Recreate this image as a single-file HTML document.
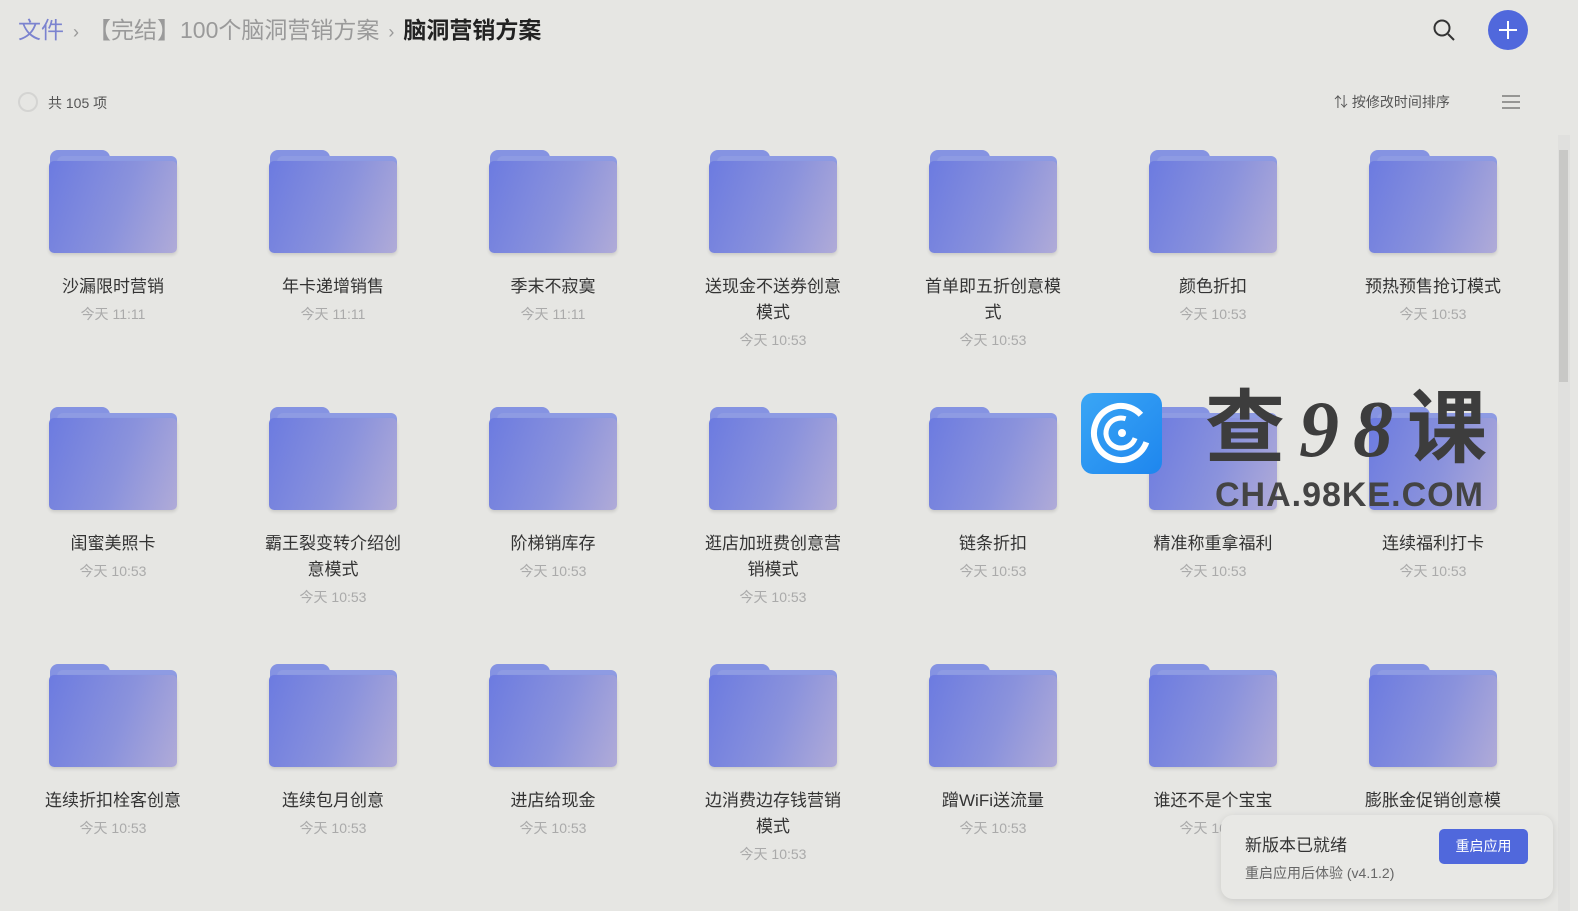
<!DOCTYPE html>
<html><head><meta charset="utf-8"><style>
*{margin:0;padding:0;box-sizing:border-box}
body{width:1578px;height:911px;background:#e6e6e3;font-family:"Liberation Sans","Noto Sans CJK SC",sans-serif;position:relative;overflow:hidden}
.bc{position:absolute;left:18px;top:14px;font-size:23px;line-height:32px;white-space:nowrap}
.sep{color:#999;font-size:18px;margin:0 9px}
.it{position:absolute;width:200px;text-align:center}
.f{position:absolute;left:36px;top:0;width:128px;height:103px}
.f .tab{position:absolute;left:1px;top:0;width:60px;height:20px;background:#8593e2;border-radius:8px 8px 0 0}
.f .tab2{position:absolute;left:8px;top:6px;width:120px;height:18px;background:#8e9be3;border-radius:6px 6px 0 0}
.f .body{position:absolute;left:0;top:11px;width:128px;height:92px;border-radius:5px;background:linear-gradient(110deg,#6c7be0 0%,#8a92dc 55%,#b0abd8 100%);box-shadow:0 2px 3px rgba(0,0,0,.12)}
.n{position:absolute;top:124px;left:25px;width:150px;font-size:17px;line-height:26px;color:#333}
.t{font-size:14px;color:#aaa;line-height:28px}
</style></head><body>
<div class="bc"><span style="color:#7b83cf">文件</span><span class="sep">›</span><span style="color:#9a9a9a">【完结】100个脑洞营销方案</span><span class="sep">›</span><b style="color:#222">脑洞营销方案</b></div>
<svg style="position:absolute;left:1432px;top:18px" width="26" height="26" viewBox="0 0 26 26"><circle cx="10" cy="10" r="7.5" fill="none" stroke="#333" stroke-width="2"/><path d="M16 16l6 6" stroke="#333" stroke-width="2"/></svg>
<div style="position:absolute;left:1488px;top:10px;width:40px;height:40px;border-radius:50%;background:#5068dc"></div>
<svg style="position:absolute;left:1488px;top:10px" width="40" height="40"><path d="M20 11v18M11 20h18" stroke="#fff" stroke-width="2"/></svg>
<div style="position:absolute;left:18px;top:92px;width:20px;height:20px;border:2px solid #d4d4d2;border-radius:50%"></div>
<div style="position:absolute;left:48px;top:93px;font-size:14px;color:#555">共 105 项</div>
<div style="position:absolute;left:1334px;top:92px;font-size:14px;color:#555">⇅ 按修改时间排序</div>
<svg style="position:absolute;left:1501px;top:94px" width="20" height="16"><path d="M1 2h18M1 8h18M1 14h18" stroke="#666" stroke-width="1.3"/></svg>
<div style="position:absolute;left:1558px;top:135px;width:12px;height:776px;background:#e0e0de"></div>
<div style="position:absolute;left:1559px;top:150px;width:9px;height:232px;background:#c8c8c6"></div>
<div id="g"></div>
<script>
var d=[["沙漏限时营销","今天 11:11"],["年卡递增销售","今天 11:11"],["季末不寂寞","今天 11:11"],["送现金不送券创意模式","今天 10:53"],["首单即五折创意模式","今天 10:53"],["颜色折扣","今天 10:53"],["预热预售抢订模式","今天 10:53"],
["闺蜜美照卡","今天 10:53"],["霸王裂变转介绍创意模式","今天 10:53"],["阶梯销库存","今天 10:53"],["逛店加班费创意营销模式","今天 10:53"],["链条折扣","今天 10:53"],["精准称重拿福利","今天 10:53"],["连续福利打卡","今天 10:53"],
["连续折扣栓客创意","今天 10:53"],["连续包月创意","今天 10:53"],["进店给现金","今天 10:53"],["边消费边存钱营销模式","今天 10:53"],["蹭WiFi送流量","今天 10:53"],["谁还不是个宝宝","今天 10:53"],["膨胀金促销创意模","今天 10:53"]];
var h="";d.forEach(function(x,i){var c=i%7,r=Math.floor(i/7);h+='<div class="it" style="left:'+(13+c*220)+'px;top:'+(150+r*257)+'px"><div class="f"><div class="tab"></div><div class="tab2"></div><div class="body"></div></div><div class="n">'+x[0]+'<div class="t">'+x[1]+'</div></div></div>';});
document.getElementById("g").innerHTML=h;
</script>
<div style="position:absolute;left:1081px;top:393px;width:81px;height:81px;border-radius:12px;background:linear-gradient(135deg,#3aa6f5,#1e86ee)"></div>
<svg style="position:absolute;left:1081px;top:393px" width="81" height="81"><circle cx="40" cy="40" r="27" fill="none" stroke="#fff" stroke-width="6" stroke-dasharray="140 30" transform="rotate(20 40 40)"/><circle cx="40" cy="40" r="15" fill="none" stroke="#fff" stroke-width="5" stroke-dasharray="70 25" transform="rotate(20 40 40)"/><circle cx="41" cy="40" r="4" fill="#fff"/></svg>
<div style="position:absolute;left:1205px;top:372px;font-size:80px;font-weight:bold;color:#3d3d3d;letter-spacing:14px;font-family:'Noto Sans CJK SC',sans-serif;line-height:100px">查<i style="font-family:'Liberation Serif'">98</i>课</div>
<div style="position:absolute;left:1215px;top:475px;font-size:34px;font-weight:bold;color:#444;letter-spacing:1px;line-height:40px">CHA.98KE.COM</div>
<div style="position:absolute;left:1221px;top:815px;width:332px;height:84px;background:#e8e8e5;border-radius:12px;box-shadow:0 2px 8px rgba(0,0,0,.12)"></div>
<div style="position:absolute;left:1245px;top:831px;font-size:17px;color:#333">新版本已就绪</div>
<div style="position:absolute;left:1245px;top:863px;font-size:14px;color:#666">重启应用后体验 (v4.1.2)</div>
<div style="position:absolute;left:1439px;top:829px;width:89px;height:35px;background:#5068dc;border-radius:5px;color:#fff;font-size:14px;text-align:center;line-height:35px">重启应用</div>
</body></html>
